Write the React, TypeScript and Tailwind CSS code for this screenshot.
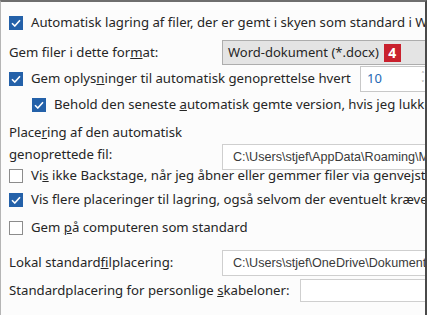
import React from 'react';

const font = { fontFamily: '"Noto Sans", "Open Sans", sans-serif' };
const pathFont = { fontFamily: '"Liberation Sans", Arial, sans-serif' };

function Box({ checked }: { checked: boolean }) {
    return checked ? (
        <span className="flex h-[14px] w-[14px] shrink-0 items-center justify-center bg-[#2461a9]">
            <svg width="10" height="8" viewBox="0 0 10 8" fill="none">
                <path d="M1 4.2 3.8 7 9 1.2" stroke="#fff" strokeWidth="1.6" />
            </svg>
        </span>
    ) : (
        <span className="h-[14px] w-[14px] shrink-0 border border-[#8c8c8c] bg-white" />
    );
}

function Check({ checked, children, indent = false }: { checked: boolean; children: React.ReactNode; indent?: boolean }) {
    return (
        <div className={`flex h-[24px] items-center gap-[8px] ${indent ? 'pl-[31px]' : 'pl-[8px]'}`}>
            <Box checked={checked} />
            <span>{children}</span>
        </div>
    );
}

function PathBox({ text }: { text: string }) {
    return (
        <div className="flex h-[26px] flex-1 items-center border border-[#cfcfcf] bg-white pl-[10px] text-[12.6px] text-[#3a3a3a]" style={pathFont}>
            {text}
        </div>
    );
}

export default function App() {
    return (
        <div className="h-[315px] w-[430px] overflow-hidden bg-white" style={font}>
            <div className="h-[315px] w-[427px] overflow-hidden border-t-2 border-l border-r-2 border-t-[#6e6e6e] border-l-[#b5b5b5] border-r-[#4a4a4a] bg-[#fcfcfc] whitespace-nowrap text-[13.2px] text-[#262626]">
                <div className="w-[560px]">
                    <div className="h-[9px]" />
                    <Check checked>Automatisk lagring af filer, der er gemt i skyen som standard i Word</Check>

                    <div className="mt-[5px] flex h-[25px] items-center">
                        <span className="w-[221px] pl-[8px]">
                            Gem filer i dette for<u>m</u>at:
                        </span>
                        <div className="flex h-[25px] flex-1 items-center gap-[5px] border border-[#adadad] bg-[#e4e4e4] pl-[5px] text-[13px]">
                            <span>Word-dokument (*.docx)</span>
                            <span className="flex h-[18px] w-[17px] items-center justify-center bg-[#c9212e] text-[14px] font-bold text-white">4</span>
                        </div>
                    </div>

                    <div className="flex h-[28px] items-center">
                        <div className="flex w-[359px] items-center gap-[8px] pl-[8px]">
                            <Box checked />
                            <span>
                                Gem oplys<u>n</u>inger til automatisk genoprettelse hvert
                            </span>
                        </div>
                        <div className="flex h-[26px] w-[68px] items-center justify-between border border-[#c8c8c8] bg-white pl-[6px] pr-[3px] text-[13px] text-[#2468b4]">
                            <span>10</span>
                            <span className="flex flex-col text-[8px] leading-[9px] text-[#666]">
                                <span>&#x2C4;</span>
                                <span>&#x2C5;</span>
                            </span>
                        </div>
                    </div>

                    <Check checked indent>
                        Behold den seneste <u>a</u>utomatisk gemte version, hvis jeg lukker uden at gemme
                    </Check>

                    <div className="mt-[4px] flex items-start">
                        <div className="w-[221px] pl-[8px] leading-[22px]">
                            Place<u>r</u>ing af den automatisk
                            <br />
                            genoprettede fil:
                        </div>
                        <div className="mt-[23px] flex flex-1">
                            <PathBox text="C:\Users\stjef\AppData\Roaming\Microsoft\Word\" />
                        </div>
                    </div>

                    <div className="-mt-[6px]">
                        <Check checked={false}>
                            Vi<u>s</u> ikke Backstage, når jeg åbner eller gemmer filer via genvejstaster
                        </Check>
                    </div>
                    <Check checked>Vis flere placeringer til lagring, også selvom der eventuelt kræves logon</Check>
                    <div className="mt-[4px]">
                        <Check checked={false}>
                            Gem <u>p</u>å computeren som standard
                        </Check>
                    </div>

                    <div className="mt-[10px] flex h-[26px] items-center">
                        <span className="w-[221px] pl-[8px]">
                            Lokal standard<u>f</u>ilplacering:
                        </span>
                        <PathBox text="C:\Users\stjef\OneDrive\Dokumenter\" />
                    </div>

                    <div className="mt-[3px] flex h-[23px] items-center">
                        <span className="w-[299px] pl-[8px]">
                            Standardplacering for personlige <u>s</u>kabeloner:
                        </span>
                        <div className="h-[23px] flex-1 border border-[#cfcfcf] bg-white" />
                    </div>
                </div>
            </div>
        </div>
    );
}
